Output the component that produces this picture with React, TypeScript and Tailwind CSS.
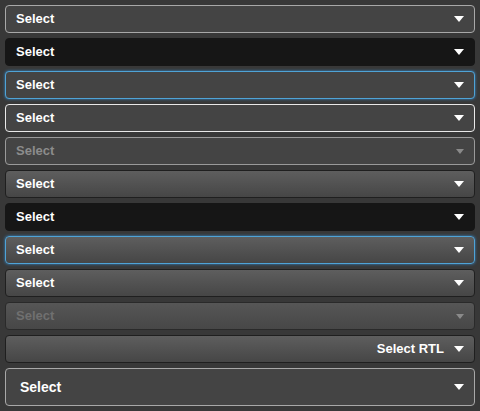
import type { ReactNode } from "react";

type Variant = {
  box: string;
  text?: string;
  disabled?: boolean;
  rtl?: boolean;
  large?: boolean;
  label?: string;
};

const flat = "bg-[#444444]";
const grad = "bg-gradient-to-b from-[#5e5e5e] to-[#464646]";

const rows: Variant[] = [
  { box: `${flat} border-[#a8a8a8]` },
  { box: "bg-[#161616] border-[#161616]" },
  { box: `${flat} border-[#4fa3d6] shadow-[0_0_3px_#3388cc]` },
  { box: `${flat} border-[#e8e8e8]` },
  { box: `${flat} border-[#9a9a9a]`, disabled: true, text: "text-[#8c8c8c]" },
  { box: `${grad} border-[#1f1f1f]` },
  { box: "bg-[#161616] border-[#161616]" },
  { box: `${grad} border-[#4fa3d6] shadow-[0_0_3px_#3388cc]` },
  { box: `${grad} border-[#1f1f1f]` },
  { box: "bg-gradient-to-b from-[#565656] to-[#474747] border-[#2a2a2a]", disabled: true, text: "text-[#707070]" },
  { box: `${grad} border-[#1f1f1f]`, rtl: true, label: "Select RTL" },
  { box: `${flat} border-[#a8a8a8]`, large: true },
];

function Arrow({ small }: { small?: boolean }) {
  return small ? (
    <svg width="8" height="5" viewBox="0 0 8 5" className="shrink-0">
      <path d="M0 0h8L4 5z" fill="#8a8a8a" />
    </svg>
  ) : (
    <svg width="10" height="6" viewBox="0 0 10 6" className="shrink-0">
      <path d="M0 0h10L5 6z" fill="#ffffff" />
    </svg>
  );
}

function SelectButton({ v }: { v: Variant }): ReactNode {
  const label = v.label ?? "Select";
  return (
    <div
      className={`flex items-center border rounded-[4px] font-bold ${v.box} ${
        v.large ? "h-[38px] pl-[14px] pr-[10px] text-[14px]" : "h-[28px] pl-[10px] pr-[10px] text-[13px]"
      }`}
    >
      {v.rtl ? (
        <>
          <span className="flex-1 text-right text-white pr-[10px]">{label}</span>
          <Arrow />
        </>
      ) : (
        <>
          <span className={`flex-1 ${v.text ?? "text-white"}`}>{label}</span>
          <span className={`flex w-[10px] justify-center ${v.disabled ? "pl-[1px]" : ""}`}>
            <Arrow small={v.disabled} />
          </span>
        </>
      )}
    </div>
  );
}

export default function App() {
  return (
    <div
      className="min-h-screen bg-[#383838] p-[5px] flex flex-col gap-[5px]"
      style={{ fontFamily: '"Liberation Sans", Arial, sans-serif' }}
    >
      {rows.map((v, i) => (
        <SelectButton key={i} v={v} />
      ))}
    </div>
  );
}
